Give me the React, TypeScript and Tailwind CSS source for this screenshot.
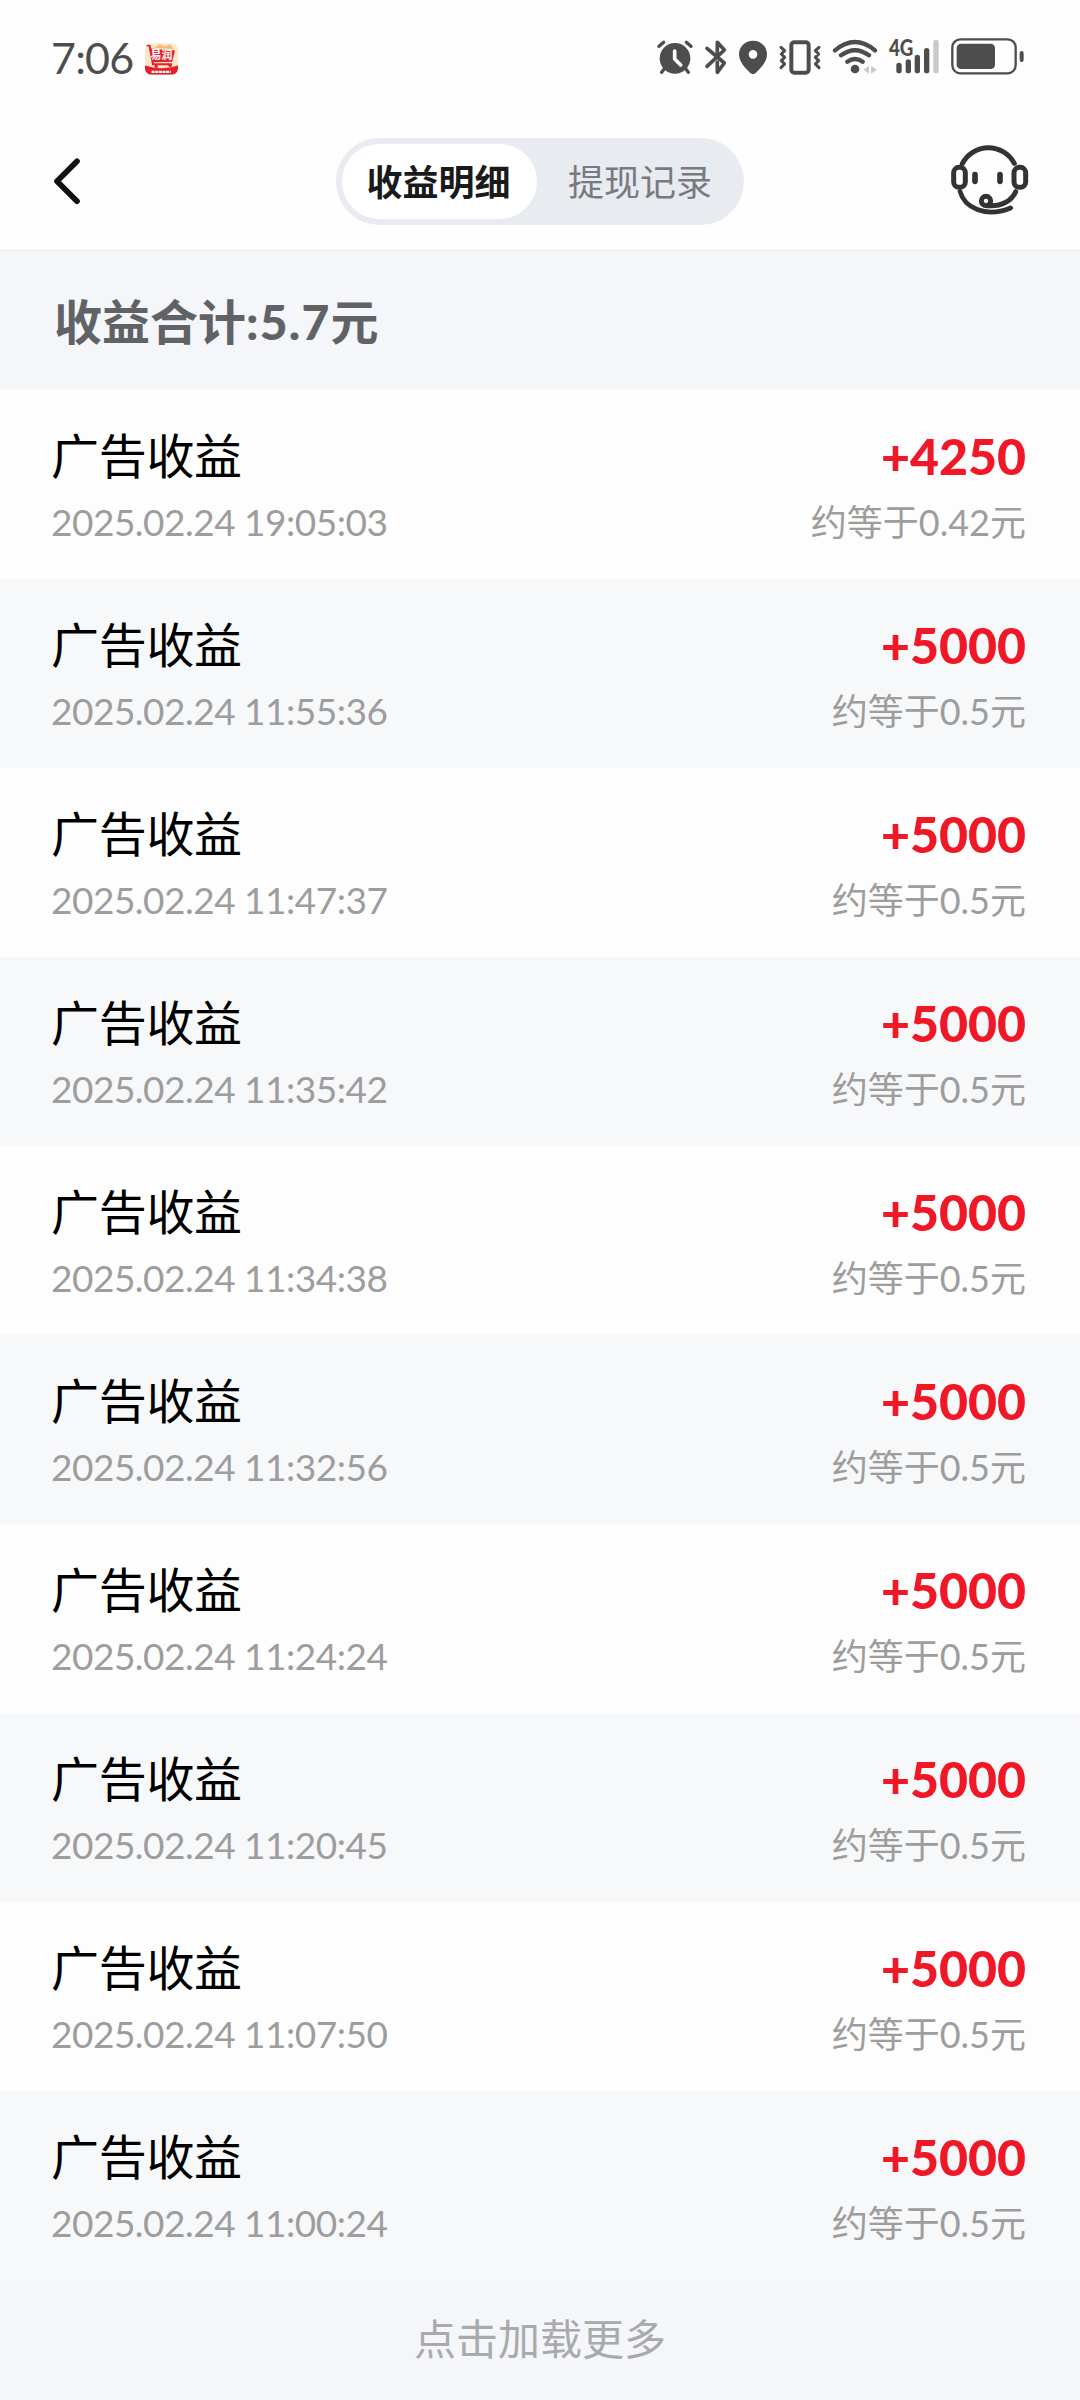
const font = "font-[Lato,'Noto_Sans_CJK_SC',sans-serif]";

type Income = {
  time: string;
  amount: string;
  money: string;
};

const incomes: Income[] = [
  { time: "2025.02.24 19:05:03", amount: "+4250", money: "0.42" },
  { time: "2025.02.24 11:55:36", amount: "+5000", money: "0.5" },
  { time: "2025.02.24 11:47:37", amount: "+5000", money: "0.5" },
  { time: "2025.02.24 11:35:42", amount: "+5000", money: "0.5" },
  { time: "2025.02.24 11:34:38", amount: "+5000", money: "0.5" },
  { time: "2025.02.24 11:32:56", amount: "+5000", money: "0.5" },
  { time: "2025.02.24 11:24:24", amount: "+5000", money: "0.5" },
  { time: "2025.02.24 11:20:45", amount: "+5000", money: "0.5" },
  { time: "2025.02.24 11:07:50", amount: "+5000", money: "0.5" },
  { time: "2025.02.24 11:00:24", amount: "+5000", money: "0.5" },
];

const StatusIcons = () => (
  <div className="flex gap-2.5 text-[#4d4d4d]">
    {/* Alarm */}
    <svg viewBox="48 51 114 120" className="w-[38px] h-10" fill="none" stroke="currentColor" strokeLinecap="round">
      <circle cx="105" cy="115" r="46" fill="currentColor" stroke="none" />
      <path d="M57 79 L71 67 M153 79 L139 67 M72 148 L65 157 M138 148 L145 157" strokeWidth="10" />
      <path d="M104 93 V117 L122 135" stroke="#fff" strokeWidth="11" strokeLinejoin="round" />
    </svg>
    {/* Bluetooth */}
    <svg viewBox="192 51 72 120" className="w-6 h-10" fill="none" stroke="currentColor" strokeWidth="11" strokeLinecap="round" strokeLinejoin="round">
      <path d="M201 85 L253 129 L232 157 V126 M201 139 L253 90 L232 67 V98" />
    </svg>
    {/* Location */}
    <svg viewBox="294 51 90 120" className="w-[30px] h-10">
      <path
        fill="currentColor"
        fillRule="evenodd"
        d="M339 62 C315 62 297 80 297 103 C297 126 316 145 331 159 Q339 166 347 159 C362 145 381 126 381 103 C381 80 363 62 339 62 Z M339 90 A13 13 0 1 1 339 116 A13 13 0 1 1 339 90 Z"
      />
    </svg>
    {/* Vibrate */}
    <svg viewBox="414 51 132 120" className="w-11 h-10" fill="none" stroke="currentColor" strokeLinecap="round" strokeLinejoin="round">
      <rect x="454" y="67" width="52" height="91" rx="9" strokeWidth="12" />
      <path d="M423 82 L434 92 L424 102 L434 112 L424 122 L434 132 L423 143 M537 82 L526 92 L536 102 L526 112 L536 122 L526 132 L537 143" strokeWidth="9" />
    </svg>
    {/* Wifi */}
    <svg viewBox="6 51 138 120" className="w-[46px] h-10" fill="none" stroke="currentColor" strokeWidth="13" strokeLinecap="round">
      <path d="M15 91 Q75 41 135 91 M33 106 Q75 75 117 106 M52 125 Q75 109 98 125" />
      <circle cx="75" cy="147" r="13" fill="currentColor" stroke="none" />
      <path d="M101 149 L117 137 V161 Z M141 149 L123 137 V161 Z" fill="#c9c9c9" stroke="none" />
    </svg>
    {/* Mobile signal */}
    <svg viewBox="174 51 156 120" className="w-[52px] h-10 overflow-visible" stroke="currentColor" strokeWidth="16" strokeLinecap="round">
      <text
        x="177"
        y="108"
        fill="currentColor"
        stroke="none"
        fontSize="66"
        fontWeight="900"
        textLength="73"
        lengthAdjust="spacingAndGlyphs"
        className="font-[Lato,sans-serif]"
      >
        4G
      </text>
      <path d="M207 136 V152 M235 126 V152 M262 112 V152 M290 92 V152" />
      <path d="M318 67 V152" stroke="#c9c9c9" />
    </svg>
    {/* Battery */}
    <svg viewBox="360 51 225 120" className="w-[75px] h-10" fill="none">
      <rect x="367" y="58" width="190" height="102" rx="24" stroke="currentColor" strokeWidth="7" />
      <rect x="380" y="71" width="115" height="76" rx="13" fill="currentColor" />
      <rect x="569" y="93" width="12" height="33" rx="6" fill="currentColor" />
    </svg>
  </div>
);

const AppBadge = () => (
  <svg viewBox="0 0 100 96" className="w-[33px] h-8">
    <defs>
      <clipPath id="badge">
        <rect width="100" height="96" rx="20" />
      </clipPath>
    </defs>
    <g clipPath="url(#badge)">
      <rect width="100" height="96" fill="#fbe6c8" />
      <path d="M28 14 L45 3 L60 10 L76 4 L86 18 Z" fill="#f2bd74" />
      <path d="M0 68 Q50 84 100 68 V96 H0 Z" fill="#e3202b" />
      <path d="M2 6 L14 8 L24 64 H82" fill="none" stroke="#e3202b" strokeWidth="6" />
      <path d="M13 16 L91 22 L82 56 L22 58 Z" fill="#e3202b" />
      <circle cx="34" cy="70" r="5" fill="#e3202b" />
      <circle cx="76" cy="68" r="5" fill="#e3202b" />
      <text x="17" y="47" fill="#fff" fontSize="33" fontWeight="700" className="font-['Noto_Sans_CJK_SC',sans-serif]">
        易润
      </text>
      <path d="M20 87 H78" stroke="#fff" strokeWidth="7" strokeDasharray="9 2" />
    </g>
  </svg>
);

const StatusBar = () => (
  <div className="h-[110px] pt-[37px] pl-[51px] pr-[55px] flex items-start justify-between">
    <div className="flex items-start">
      <div className="w-[94px] h-10 leading-[42px] text-[43px] tracking-[-0.8px] text-[#4d4d4d]">7:06</div>
      <div className="pt-[6px]">
        <AppBadge />
      </div>
    </div>
    <StatusIcons />
  </div>
);

const Header = () => (
  <div className="h-[141px] pl-[51px] pr-[50px] pt-[28px] flex items-start justify-between border-b border-[#ebedf0]">
    <svg viewBox="63 75 96 150" className="w-8 h-[50px] mt-[17px]" fill="none" stroke="#111" strokeWidth="17" strokeLinecap="round" strokeLinejoin="round">
      <path d="M141 94 L81 154 L141 214" />
    </svg>
    <div className="ml-[47px] w-[408px] h-[87px] p-1.5 rounded-full bg-[#e8ebf0] flex text-[36px] leading-[77px] text-center">
      <div className="w-[195px] pr-0.5 rounded-full bg-white font-bold text-[#1a1a1a]">收益明细</div>
      <div className="flex-1 pl-[5px] text-[#777a7e]">提现记录</div>
    </div>
    {/* Customer service */}
    <svg viewBox="60 39 240 222" className="w-20 h-[74px] mt-[5px]" fill="none" stroke="#333" strokeWidth="15" strokeLinecap="round">
      <path d="M97 101 A88 88 0 0 1 253 100" />
      <rect x="71" y="112" width="35" height="60" rx="16" />
      <rect x="252" y="112" width="35" height="60" rx="16" />
      <path d="M135 134 V154 M210 134 V154" strokeWidth="17" />
      <path d="M90 184 C103 232 165 265 242 234" strokeWidth="14" />
      <circle cx="168" cy="213" r="14" />
      <path d="M257 185 C245 212 215 231 172 227" />
    </svg>
  </div>
);

const IncomeRow = ({ time, amount, money }: Income) => (
  <li className="h-[189px] pt-[34px] pl-[51px] pr-[54px] flex justify-between odd:bg-[#fdfdfd] even:bg-[#f7f8fa]">
    <div>
      <div className="h-16 leading-[64px] text-[48px] tracking-[-0.3px] text-black">广告收益</div>
      <div className="h-[68px] leading-[68px] text-[37px] tracking-[-0.5px] text-[#9d9d9d]">{time}</div>
    </div>
    <div className="text-right">
      <div className="h-16 leading-[64px] text-[50px] font-black text-[#f01827]">{amount}</div>
      <div className="h-[68px] leading-[68px] text-[36px] text-[#9d9d9d]">约等于{money}元</div>
    </div>
  </li>
);

function App() {
  return (
    <div className={`w-[1080px] h-[2400px] overflow-hidden bg-[#f4f6fa] ${font}`}>
      <div className="bg-[#fefefe]">
        <StatusBar />
        <Header />
      </div>
      <div className="h-[139px] pl-[54px] leading-[141px] text-[48px] font-bold text-[#616265]">
        收益合计<span className="font-black tracking-[1.2px]">:5.7</span>元
      </div>
      <ul>
        {incomes.map((income) => (
          <IncomeRow key={income.time} {...income} />
        ))}
      </ul>
      <div className="h-[120px] leading-[119px] text-center text-[42px] text-[#a9aaac]">点击加载更多</div>
    </div>
  );
}

export default App;
